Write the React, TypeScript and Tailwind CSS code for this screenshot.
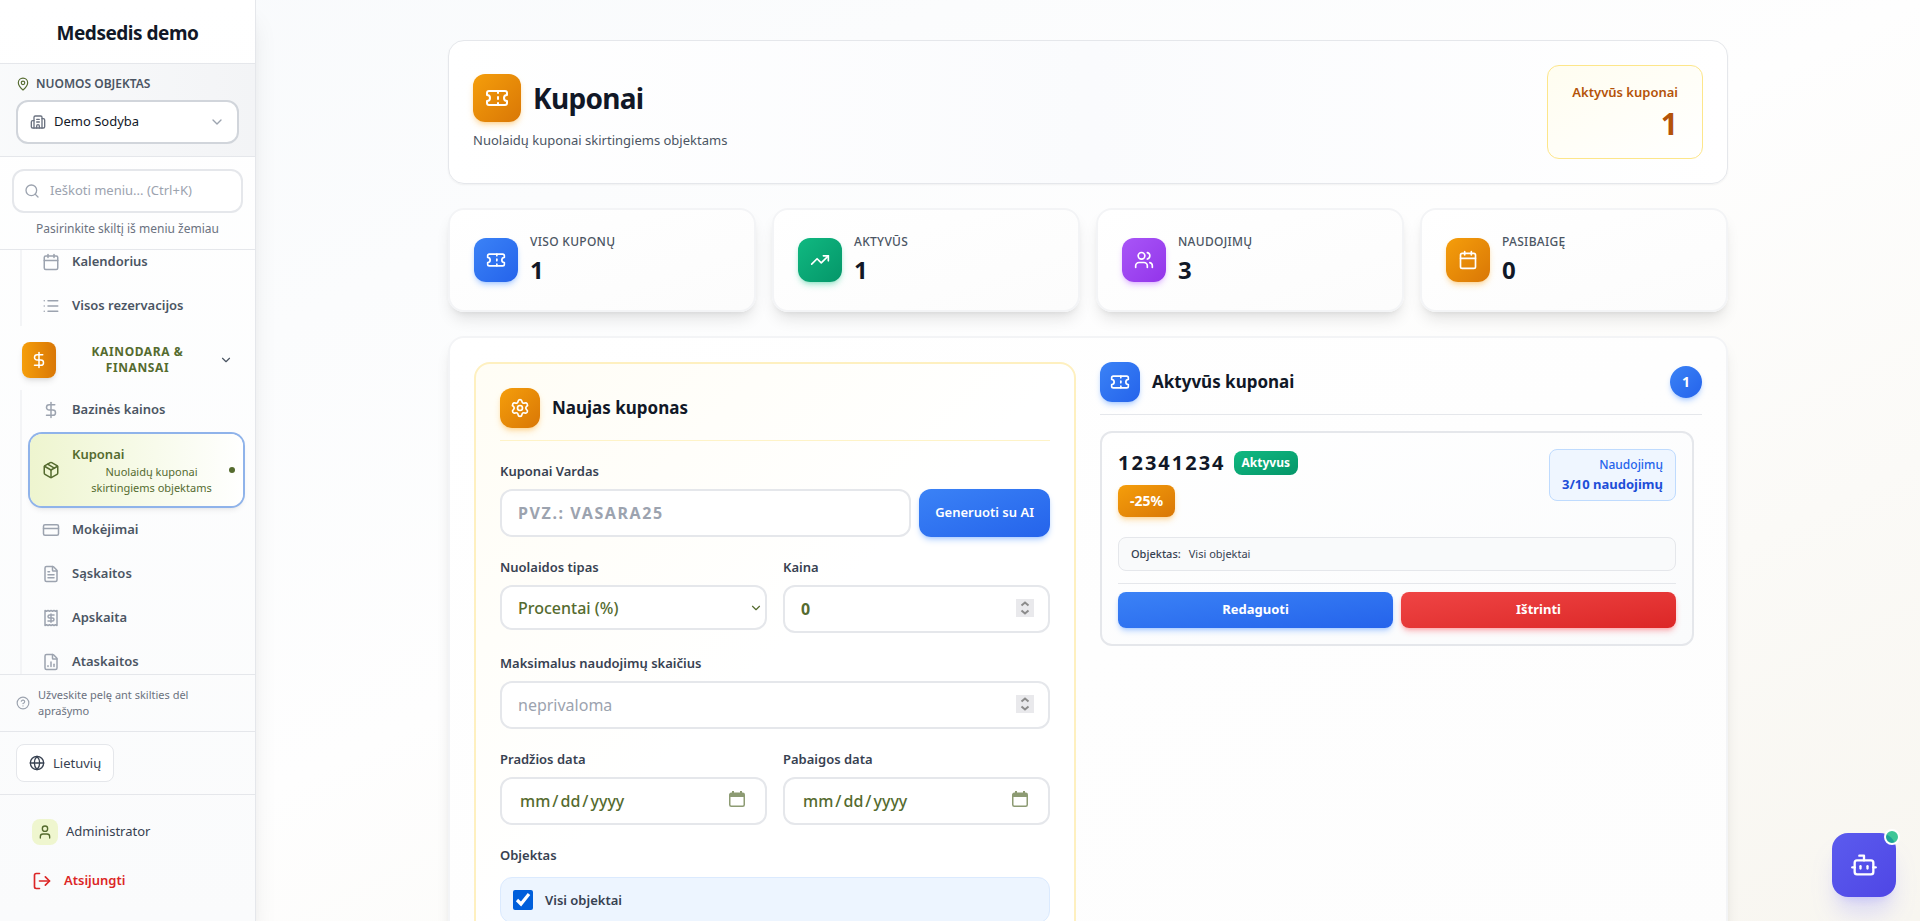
import type { ReactNode } from "react";
import {
  Bot,
  Building2,
  Calendar,
  ChevronDown,
  CircleHelp,
  CreditCard,
  DollarSign,
  FileChartColumn,
  FileText,
  Globe,
  List,
  LogOut,
  MapPin,
  Package,
  Search,
  Settings,
  Ticket,
  TrendingUp,
  User,
  Users,
} from "lucide-react";
import type { LucideIcon } from "lucide-react";

// zigzag-edged receipt with a dollar sign
const ReceiptIcon = ({ className }: { className?: string }) => (
  <svg
    viewBox="0 0 24 24"
    fill="none"
    stroke="currentColor"
    strokeWidth="2"
    strokeLinecap="round"
    strokeLinejoin="round"
    className={className}
  >
    <path d="M4 2v20l2-1 2 1 2-1 2 1 2-1 2 1 2-1 2 1V2l-2 1-2-1-2 1-2-1-2 1-2-1-2 1Z" />
    <path d="M16 8h-6a2 2 0 1 0 0 4h4a2 2 0 1 1 0 4H8" />
    <path d="M12 17.5v-11" />
  </svg>
);

type NavItemProps = { icon: LucideIcon | typeof ReceiptIcon; label: string };

const NavItem = ({ icon: Icon, label }: NavItemProps) => (
  <a
    href="#"
    className="flex h-10 items-center gap-3 rounded-xl px-3 text-[13px] font-semibold text-[#4b5563]"
  >
    <Icon className="h-[18px] w-[18px] text-[#9ca3af]" />
    {label}
  </a>
);

const stats = [
  {
    label: "Viso kuponų",
    value: 1,
    icon: Ticket,
    tile: "from-[#3b82f6] to-[#2563eb] shadow-blue-500/30",
  },
  {
    label: "Aktyvūs",
    value: 1,
    icon: TrendingUp,
    tile: "from-[#10b981] to-[#059669] shadow-emerald-500/30",
  },
  {
    label: "Naudojimų",
    value: 3,
    icon: Users,
    tile: "from-[#a855f7] to-[#9333ea] shadow-purple-500/30",
  },
  {
    label: "Pasibaigę",
    value: 0,
    icon: Calendar,
    tile: "from-[#f59e0b] to-[#d97706] shadow-amber-500/30",
  },
];

const inputStyle =
  "h-12 w-full rounded-xl border-2 border-[#e5e7eb] bg-white px-4 text-base text-[#556b2f] placeholder:text-[#9ca3af]";

type FieldProps = { id: string; label: string; children: ReactNode };

const Field = ({ id, label, children }: FieldProps) => (
  <div className="min-w-0 flex-1">
    <label
      htmlFor={id}
      className="mb-2 block text-[13px] leading-5 font-semibold text-[#374151]"
    >
      {label}
    </label>
    <div className="relative">{children}</div>
  </div>
);

type NumberInputProps = {
  id: string;
  placeholder?: string;
  defaultValue?: number;
};

const NumberInput = ({ id, placeholder, defaultValue }: NumberInputProps) => (
  <>
    <input
      id={id}
      type="number"
      placeholder={placeholder}
      defaultValue={defaultValue}
      className={`${inputStyle} font-bold placeholder:font-normal [&::-webkit-inner-spin-button]:opacity-0`}
    />
    <svg
      viewBox="0 0 18 18"
      fill="none"
      stroke="#8b8b8b"
      strokeWidth="2"
      className="pointer-events-none absolute top-3.5 right-4 h-[18px] w-[18px] bg-[#e9e9ec]"
    >
      <path d="M5.5 6.5 9 3.5l3.5 3" />
      <path d="M5.5 11.5 9 14.5l3.5-3" />
    </svg>
  </>
);

const DateInput = ({ id }: { id: string }) => (
  <>
    <input
      id={id}
      type="date"
      className={`${inputStyle} font-medium [&::-webkit-calendar-picker-indicator]:opacity-0 [&::-webkit-datetime-edit-day-field]:px-0.5 [&::-webkit-datetime-edit-month-field]:px-0.5 [&::-webkit-datetime-edit-year-field]:px-0.5`}
    />
    <svg
      viewBox="0 0 16 16"
      className="pointer-events-none absolute top-3.5 right-[22px] h-4 w-4 text-[#8d9b73]"
    >
      <rect
        x="0.75"
        y="2.25"
        width="14.5"
        height="13"
        rx="1.5"
        fill="none"
        stroke="currentColor"
        strokeWidth="1.5"
      />
      <path d="M1 2h14v4H1zM3 0h2v3H3zM11 0h2v3h-2z" fill="currentColor" />
    </svg>
  </>
);

const Sidebar = () => {
  return (
    <aside className="flex h-full w-64 shrink-0 flex-col border-r border-gray-200 bg-gradient-to-b from-white to-[#fafbfc] shadow-xl shadow-black/10">
      <div className="flex h-16 shrink-0 items-center justify-center border-b border-gray-200 pt-1">
        <h2 className="text-[19px] font-bold tracking-tight text-[#111827]">
          Medsedis demo
        </h2>
      </div>

      <div className="border-b border-gray-200 bg-gradient-to-r from-gray-50 to-gray-100 px-4 py-3">
        <label
          htmlFor="property"
          className="mb-2 flex items-center gap-2 text-xs font-semibold text-[#4b5563] uppercase"
        >
          <MapPin className="h-3.5 w-3.5 -mr-0.5 text-[#556b2f]" />
          Nuomos objektas
        </label>
        <button
          id="property"
          className="flex h-11 w-full items-center gap-2 rounded-xl border-2 border-[#d1d5db] bg-white px-3 text-[13px] text-[#111827]"
        >
          <Building2 className="h-4 w-4 text-[#6b7280]" />
          Demo Sodyba
          <ChevronDown className="ml-auto h-4 w-4 text-[#9ca3af]" />
        </button>
      </div>

      <div className="border-b border-gray-200 px-3 py-3">
        <div className="flex h-11 items-center gap-2.5 rounded-xl border-2 border-[#e5e7eb] bg-white px-2.5">
          <Search className="h-4 w-4 shrink-0 text-[#9ca3af]" />
          <input
            type="text"
            aria-label="Ieškoti meniu"
            placeholder="Ieškoti meniu... (Ctrl+K)"
            className="w-full min-w-0 text-[13px] placeholder:text-[#9ca3af]"
          />
        </div>
        <p className="mt-2 text-center text-xs text-[#6b7280]">
          Pasirinkite skiltį iš meniu žemiau
        </p>
      </div>

      <nav className="min-h-0 flex-1 overflow-hidden pr-3 pl-5">
        <div className="-mt-2 flex flex-col gap-1 border-l-2 border-gray-100 pl-2">
          <NavItem icon={Calendar} label="Kalendorius" />
          <NavItem icon={List} label="Visos rezervacijos" />
        </div>
        <button className="flex h-16 w-full items-center pt-1 pr-2.5 pl-0.5">
          <span className="flex h-9 w-[34px] shrink-0 items-center justify-center rounded-lg bg-gradient-to-r from-[#f59e0b] to-[#d97706] text-white shadow-md">
            <DollarSign className="h-[18px] w-[18px]" />
          </span>
          <span className="flex-1 px-3 text-center text-xs leading-4 font-bold tracking-wider text-[#556b2f] uppercase">
            Kainodara & Finansai
          </span>
          <ChevronDown className="h-3.5 w-3.5 text-[#4b5563]" />
        </button>
        <div className="flex flex-col gap-1 border-l-2 border-gray-100 pl-2">
          <NavItem icon={DollarSign} label="Bazinės kainos" />
          <a
            href="#"
            aria-current="page"
            className="relative flex items-center gap-3 rounded-xl bg-gradient-to-r from-[#eef5cf] to-white px-3 py-2.5 text-[13px] leading-5 font-semibold text-[#556b2f] shadow-md ring-2 ring-[#8fb3ea]"
          >
            <Package className="h-[18px] w-[18px] shrink-0" />
            <span className="flex-1">
              Kuponai
              <span className="block px-3 text-center text-[11px] leading-4 font-normal">
                Nuolaidų kuponai skirtingiems objektams
              </span>
            </span>
            <span className="absolute right-2 h-1.5 w-1.5 rounded-full bg-[#556b2f]" />
          </a>
          <NavItem icon={CreditCard} label="Mokėjimai" />
          <NavItem icon={FileText} label="Sąskaitos" />
          <NavItem icon={ReceiptIcon} label="Apskaita" />
          <NavItem icon={FileChartColumn} label="Ataskaitos" />
        </div>
      </nav>

      <div className="flex items-center gap-2 border-t border-gray-200 px-4 py-3 text-[11px] leading-4 text-[#6b7280]">
        <CircleHelp className="h-3.5 w-3.5 shrink-0 text-[#9ca3af]" />
        <p className="pr-8">Užveskite pelę ant skilties dėl aprašymo</p>
      </div>

      <div className="border-t border-gray-200 px-4 py-3">
        <button className="flex items-center gap-2 rounded-lg border border-gray-200 bg-white px-3 py-2 text-[13px] leading-5 text-[#374151]">
          <Globe className="h-4 w-4" />
          Lietuvių
        </button>
      </div>

      <div className="flex flex-col gap-5 border-t border-gray-200 px-8 py-6">
        <div className="flex items-center gap-2 text-[13px] text-[#374151]">
          <span className="flex h-[26px] w-[26px] items-center justify-center rounded-lg bg-[#eff6cf] text-[#556b2f]">
            <User className="h-4 w-4" />
          </span>
          Administrator
        </div>
        <button className="flex h-8 items-center gap-3 text-[13px] font-semibold text-[#dc2626]">
          <LogOut className="h-5 w-5" />
          Atsijungti
        </button>
      </div>
    </aside>
  );
};

const CouponForm = () => {
  return (
    <form className="rounded-2xl border-2 border-[#fef0c0] bg-gradient-to-br from-[#fffdf5] via-white to-white p-6">
      <div className="mb-5 flex items-center gap-3 border-b border-[#fef3c7] pb-3">
        <span className="flex h-10 w-10 items-center justify-center rounded-xl bg-gradient-to-br from-[#f59e0b] to-[#d97706] text-white shadow-md shadow-amber-500/30">
          <Settings className="h-5 w-5" />
        </span>
        <h2 className="text-[17px] font-bold text-[#111827]">Naujas kuponas</h2>
      </div>

      <div className="flex flex-col gap-5">
        <div className="flex items-end gap-2">
          <Field id="name" label="Kuponai Vardas">
            <input
              id="name"
              type="text"
              placeholder="PVZ.: VASARA25"
              className={`${inputStyle} font-bold tracking-widest`}
            />
          </Field>
          <button
            type="button"
            className="h-12 rounded-xl bg-gradient-to-br from-[#3b82f6] to-[#2563eb] px-4 text-[13px] font-semibold text-white shadow-md shadow-blue-500/30"
          >
            Generuoti su AI
          </button>
        </div>

        <div className="flex gap-4">
          <Field id="type" label="Nuolaidos tipas">
            <select
              id="type"
              className="h-[45px] w-full appearance-none rounded-xl border-2 border-[#e5e7eb] bg-white px-4 text-base font-medium text-[#556b2f]"
            >
              <option>Procentai (%)</option>
            </select>
            <ChevronDown className="pointer-events-none absolute top-4 right-1 h-3.5 w-3.5 text-[#556b2f]" />
          </Field>
          <Field id="price" label="Kaina">
            <NumberInput id="price" defaultValue={0} />
          </Field>
        </div>

        <Field id="limit" label="Maksimalus naudojimų skaičius">
          <NumberInput id="limit" placeholder="neprivaloma" />
        </Field>

        <div className="flex gap-4">
          <Field id="start" label="Pradžios data">
            <DateInput id="start" />
          </Field>
          <Field id="end" label="Pabaigos data">
            <DateInput id="end" />
          </Field>
        </div>

        <fieldset>
          <legend className="mb-3 text-[13px] leading-5 font-semibold text-[#374151]">
            Objektas
          </legend>
          <label className="flex items-center gap-3 rounded-xl border border-[#dbeafe] bg-[#edf5ff] p-3 text-[13px] leading-5 font-semibold text-[#374151]">
            <input
              type="checkbox"
              defaultChecked
              className="h-5 w-5 accent-[#005fdb]"
            />
            Visi objektai
          </label>
        </fieldset>
      </div>
    </form>
  );
};

const CouponList = () => {
  return (
    <section>
      <div className="mb-4 flex items-center gap-3 border-b border-gray-200 pb-3">
        <span className="flex h-10 w-10 items-center justify-center rounded-xl bg-gradient-to-br from-[#3b82f6] to-[#2563eb] text-white shadow-md shadow-blue-500/30">
          <Ticket className="h-5 w-5" />
        </span>
        <h2 className="text-[17px] font-bold text-[#111827]">
          Aktyvūs kuponai
        </h2>
        <span className="ml-auto flex h-8 w-8 items-center justify-center rounded-full bg-gradient-to-br from-[#3b82f6] to-[#2563eb] text-sm font-bold text-white shadow-md shadow-blue-500/30">
          1
        </span>
      </div>

      <article className="mr-2 rounded-xl border-2 border-[#e5e7eb] bg-gradient-to-br from-white to-[#fafbfc] p-4">
        <div className="mb-5 flex items-start justify-between">
          <div className="flex flex-col items-start gap-2">
            <div className="flex items-center gap-2">
              <h3 className="text-xl font-bold tracking-widest text-[#111827]">
                12341234
              </h3>
              <span className="rounded-lg bg-gradient-to-br from-[#10b981] to-[#059669] px-2 py-1 text-xs font-bold text-white">
                Aktyvus
              </span>
            </div>
            <span className="rounded-lg bg-gradient-to-br from-[#f59e0b] to-[#d97706] px-3 py-1.5 text-sm font-bold text-white shadow-md shadow-amber-500/30">
              -25%
            </span>
          </div>
          <div className="rounded-lg border border-[#bfdbfe] bg-[#eff6ff] px-3 py-1.5 text-right">
            <p className="text-xs leading-[18px] font-medium text-[#2563eb]">
              Naudojimų
            </p>
            <p className="text-[13px] leading-5 font-bold text-[#1d4ed8]">
              3/10 naudojimų
            </p>
          </div>
        </div>
        <p className="mb-3 rounded-lg border border-gray-200 bg-gray-50 px-3 py-2 text-[11px] leading-4 text-[#374151]">
          <span className="mr-2 font-medium">Objektas:</span>
          Visi objektai
        </p>
        <div className="flex gap-2 border-t border-gray-200 pt-2">
          <button className="h-9 flex-1 rounded-lg bg-gradient-to-br from-[#3b82f6] to-[#2563eb] text-[13px] font-bold text-white shadow-md shadow-blue-500/30">
            Redaguoti
          </button>
          <button className="h-9 flex-1 rounded-lg bg-gradient-to-br from-[#ef4444] to-[#dc2626] text-[13px] font-bold text-white shadow-md shadow-red-500/30">
            Ištrinti
          </button>
        </div>
      </article>
    </section>
  );
};

const App = () => {
  return (
    <div className="flex h-screen overflow-hidden bg-gradient-to-br from-[#f8fafc] via-[#fefefe] to-[#f8f6f0] font-['Noto_Sans',sans-serif]">
      <Sidebar />

      <main className="min-w-0 flex-1 overflow-hidden px-8 pt-10">
        <div className="mx-auto flex max-w-7xl flex-col gap-6">
          <header className="flex items-center justify-between rounded-2xl border border-gray-200 bg-gradient-to-r from-white via-[#fafbfd] to-white p-6 shadow-xs">
            <div>
              <div className="flex items-center gap-3">
                <span className="flex h-12 w-12 items-center justify-center rounded-xl bg-gradient-to-br from-[#f59e0b] to-[#d97706] text-white shadow-md shadow-amber-500/30">
                  <Ticket className="h-6 w-6" />
                </span>
                <h1 className="text-[28px] leading-9 font-bold tracking-tight text-[#111827]">
                  Kuponai
                </h1>
              </div>
              <p className="mt-2 text-[13px] leading-5 text-[#4b5563]">
                Nuolaidų kuponai skirtingiems objektams
              </p>
            </div>
            <div className="rounded-xl border border-[#fde68a] bg-gradient-to-br from-[#fffdf0] to-white px-6 py-4 text-right text-[#b45309]">
              <p className="text-[13px] leading-5 font-semibold">
                Aktyvūs kuponai
              </p>
              <p className="mt-1 text-3xl font-bold">1</p>
            </div>
          </header>

          <div className="grid grid-cols-4 gap-4">
            {stats.map(({ label, value, icon: Icon, tile }) => (
              <div
                key={label}
                className="flex items-center gap-3 rounded-2xl border-2 border-gray-100 bg-gradient-to-br from-white to-[#fcfcfc] p-6 shadow-lg"
              >
                <span
                  className={`flex h-11 w-11 items-center justify-center rounded-xl bg-gradient-to-br text-white shadow-md ${tile}`}
                >
                  <Icon className="h-5 w-5" />
                </span>
                <div>
                  <p className="text-xs font-medium tracking-wide text-[#4b5563] uppercase">
                    {label}
                  </p>
                  <p className="mt-1 text-2xl font-bold text-[#111827]">
                    {value}
                  </p>
                </div>
              </div>
            ))}
          </div>

          <div className="grid grid-cols-2 gap-6 rounded-2xl border-2 border-gray-100 bg-gradient-to-br from-white to-[#fdfdfd] p-6 shadow-lg">
            <CouponForm />
            <CouponList />
          </div>
        </div>
      </main>

      <button
        aria-label="AI asistentas"
        className="fixed right-6 bottom-6 flex h-16 w-16 items-center justify-center rounded-2xl bg-gradient-to-br from-[#5b5bee] to-[#4f46e5] text-white shadow-xl shadow-indigo-500/20"
      >
        <Bot className="h-7 w-7" />
        <span className="absolute -top-1 -right-1 h-4 w-4 rounded-full border-2 border-white bg-[#10b981]/80" />
      </button>
    </div>
  );
};

export default App;
